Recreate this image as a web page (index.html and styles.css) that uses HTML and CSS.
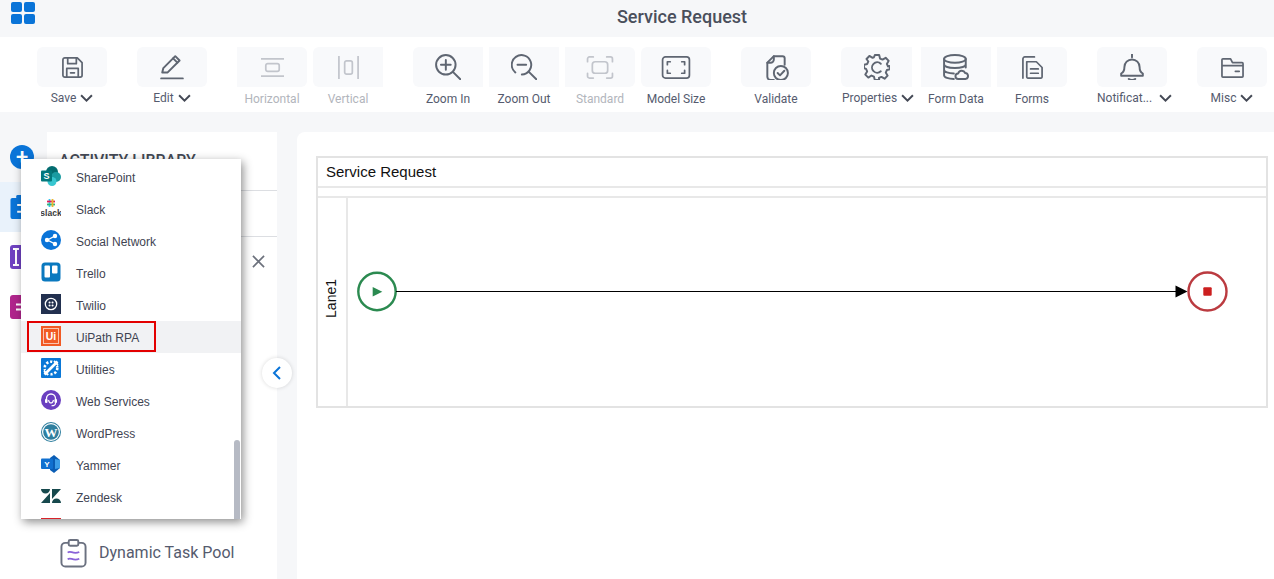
FILE: index.html
```html
<!DOCTYPE html>
<html lang="en">
<head>
    <meta charset="utf-8">
    <title>Service Request</title>
    <link rel="stylesheet" href="styles.css">
</head>
<body>
    <header class="topbar">
        <div class="logo"><span></span><span></span><span></span><span></span></div>
        <h1 class="title">Service Request</h1>
    </header>

    <nav class="toolbar">
        <div class="tool-group">
            <div class="tool">
                <div class="tool-btn"><svg viewBox="0 0 24 24"><path d="M4 2h13l5 5v13a2 2 0 0 1-2 2H4a2 2 0 0 1-2-2V4a2 2 0 0 1 2-2z"/><path d="M7 2v6h9V2M6 22v-9h12v9M10 17.500h4"/></svg></div>
                <div class="tool-label">Save <svg class="chev" viewBox="0 0 12 8"><path d="M1 1l5 5 5-5"/></svg></div>
            </div>
        </div>
        <div class="tool-group">
            <div class="tool">
                <div class="tool-btn"><svg class="big" viewBox="0 0 24 24"><path d="M3 17l1-4L15 2l4 4L8 17z"/><path d="M13 4l4 4M2 22.500h20"/></svg></div>
                <div class="tool-label">Edit <svg class="chev" viewBox="0 0 12 8"><path d="M1 1l5 5 5-5"/></svg></div>
            </div>
        </div>
        <div class="tool-group">
            <div class="tool disabled">
                <div class="tool-btn sq-l"><svg viewBox="0 0 24 24"><rect x="5" y="8" width="14" height="8" rx="2"/><path d="M0 3h24M0 21h24"/></svg></div>
                <div class="tool-label plain">Horizontal</div>
            </div>
            <div class="tool disabled">
                <div class="tool-btn sq-r"><svg viewBox="0 0 24 24"><rect x="8" y="5" width="8" height="14" rx="2"/><path d="M2 0v24M22 0v24"/></svg></div>
                <div class="tool-label plain">Vertical</div>
            </div>
        </div>
        <div class="tool-group">
            <div class="tool">
                <div class="tool-btn sq-r"><svg class="big" viewBox="0 0 24 24"><circle cx="10" cy="10" r="9"/><path d="M10 5.500v9M5.500 10h9M16.500 16.500l7 7"/></svg></div>
                <div class="tool-label plain">Zoom In</div>
            </div>
            <div class="tool">
                <div class="tool-btn sq-l sq-r"><svg class="big" viewBox="0 0 24 24"><path d="M4 17a9 9 0 1 1 6 2"/><path d="M6 10h8M16.500 16.500l7 7"/></svg></div>
                <div class="tool-label plain">Zoom Out</div>
            </div>
            <div class="tool disabled">
                <div class="tool-btn sq-l"><svg class="wide" viewBox="0 0 28 24"><rect x="6" y="6" width="16" height="12" rx="3"/><path d="M1 6V3a2 2 0 0 1 2-2h4M21 1h4a2 2 0 0 1 2 2v3M27 18v3a2 2 0 0 1-2 2h-4M7 23H3a2 2 0 0 1-2-2v-3"/></svg></div>
                <div class="tool-label plain">Standard</div>
            </div>
            <div class="tool">
                <div class="tool-btn"><svg class="wide" viewBox="0 0 30 24"><rect x="1" y="1" width="28" height="22" rx="3"/><path d="M6 9V6h3M21 6h3v3M24 15v3h-3M9 18H6v-3"/></svg></div>
                <div class="tool-label plain">Model Size</div>
            </div>
        </div>
        <div class="tool-group">
            <div class="tool">
                <div class="tool-btn"><svg class="big" viewBox="0 0 24 24"><path d="M10 24H7a3 3 0 0 1-3-3V8l6-6h8a2 2 0 0 1 2 2v6"/><path d="M4 8h3a3 3 0 0 0 3-3V2"/><circle cx="16.500" cy="17.500" r="6.500"/><path d="M13.500 17.500l2.200 2.200 4-4.200"/></svg></div>
                <div class="tool-label plain">Validate</div>
            </div>
        </div>
        <div class="tool-group">
            <div class="tool tool-wide">
                <div class="tool-btn sq-r"><svg class="big" viewBox="0 0 24 24"><path d="M10 1h4l.8 3.200 2.300 1 2.900-1.700 2.800 2.800-1.700 2.900 1 2.300L24 11v3l-2.900.8-1 2.300 1.700 2.900-2.800 2.800-2.900-1.700-2.300 1L14 24h-4l-.8-3.100-2.300-1L4 21.800 1.200 19l1.700-2.900-1-2.300L0 13v-3l3-.8 1-2.300L2.300 4.600 5 1.800l2.900 1.700 1.300-.5z"/><path d="M15.500 9a4.800 4.800 0 1 0 0 7"/></svg></div>
                <div class="tool-label">Properties <svg class="chev" viewBox="0 0 12 8"><path d="M1 1l5 5 5-5"/></svg></div>
            </div>
            <div class="tool">
                <div class="tool-btn sq-l sq-r"><svg class="big" viewBox="0 0 24 24"><ellipse cx="11" cy="4.500" rx="10" ry="3.500"/><path d="M1 4.500v15c0 2 4 3.500 9 3.500M21 4.500v8M1 9.500c0 2 4 3.500 10 3.500s10-1.500 10-3.500M1 14.500c0 2 4 3.500 9 3.500"/><path d="M14 23a2.500 2.500 0 0 1 0-5 3.500 3.500 0 0 1 6.500-.5A2.800 2.800 0 0 1 21 23z"/></svg></div>
                <div class="tool-label plain">Form Data</div>
            </div>
            <div class="tool">
                <div class="tool-btn sq-l"><svg viewBox="0 0 24 24"><path d="M2 23V3a2 2 0 0 1 2-2h10"/><path d="M6 6h10l6 6v10a1 1 0 0 1-1 1H7a1 1 0 0 1-1-1z"/><path d="M10 13.500h8M10 18h8"/></svg></div>
                <div class="tool-label plain">Forms</div>
            </div>
        </div>
        <div class="tool-group">
            <div class="tool">
                <div class="tool-btn"><svg class="big" viewBox="0 0 24 24"><path d="M12 0v3M5 12a7 7 0 0 1 14 0c0 3 1 5 3 6v2H2v-2c2-1 3-3 3-6zM9 23c1 1.200 5 1.200 6 0"/></svg></div>
                <div class="tool-label spread">Notificat... <svg class="chev" viewBox="0 0 12 8"><path d="M1 1l5 5 5-5"/></svg></div>
            </div>
        </div>
        <div class="tool-group">
            <div class="tool">
                <div class="tool-btn"><svg viewBox="0 0 24 24"><path d="M1 21V4a1 1 0 0 1 1-1h8l2 4h10a1 1 0 0 1 1 1v13a1 1 0 0 1-1 1H2a1 1 0 0 1-1-1zM1 10h22M15 16h4"/></svg></div>
                <div class="tool-label">Misc <svg class="chev" viewBox="0 0 12 8"><path d="M1 1l5 5 5-5"/></svg></div>
            </div>
        </div>
    </nav>

    <main class="workspace">
        <aside class="rail">
            <div class="rail-add">+</div>
            <div class="rail-item active">
                <svg viewBox="0 0 24 25"><path d="M2 3h20a2 2 0 0 1 2 2v18a2 2 0 0 1-2 2H2a2 2 0 0 1-2-2V5a2 2 0 0 1 2-2z" fill="#0a74d8"/><rect x="6" y="0" width="12" height="6" rx="1.500" fill="#0a74d8"/><path d="M7 10.500h12M7 17.500h12" stroke="#fff" stroke-width="2"/></svg>
            </div>
            <div class="rail-item">
                <svg viewBox="0 0 24 24"><rect width="24" height="24" rx="3" fill="#6f42c1"/><path d="M3 4h6M3 20h6M6 4v16" stroke="#fff" stroke-width="2"/></svg>
            </div>
            <div class="rail-item">
                <svg viewBox="0 0 24 24"><rect width="24" height="24" rx="3" fill="#b0258c"/><path d="M6 9.500h13M6 14.500h13" stroke="#fff" stroke-width="2"/></svg>
            </div>
        </aside>

        <section class="panel">
            <div class="panel-head">ACTIVITY LIBRARY</div>
            <div class="panel-search"></div>
            <div class="panel-close"><svg viewBox="0 0 14 14"><path d="M1 1l12 12M13 1L1 13"/></svg></div>
            <div class="panel-item">
                <svg viewBox="0 0 28 30"><rect class="clip" x="1.500" y="4" width="25" height="24.500" rx="4"/><rect class="clip" x="9" y="1" width="10" height="6" rx="1.500"/><path class="wave" d="M8 14c3-3 5 2.500 12-.5M8 21c3-3 5 2.500 12-.5"/></svg>
                Dynamic Task Pool
            </div>
            <button class="collapse"><svg viewBox="0 0 10 16"><path d="M8 2L2 8l6 6"/></svg></button>
        </section>

        <section class="canvas">
            <div class="pool">
                <div class="pool-name">Service Request</div>
                <div class="pool-gap"></div>
                <div class="lane">
                    <div class="lane-name"><span>Lane1</span></div>
                    <svg class="diagram" viewBox="348 198 918 208">
                        <circle cx="377" cy="291.500" r="18.700" fill="#fff" stroke="#2b8a50" stroke-width="2.400"/>
                        <path d="M372.700 287v9.500l9.600-4.750z" fill="#2b8a50"/>
                        <path d="M396 291.500h780" stroke="#000" stroke-width="1"/>
                        <path d="M1175.500 285.500l12 6-12 6z" fill="#000"/>
                        <circle cx="1207.500" cy="291.500" r="19" fill="#fff" stroke="#bb3b40" stroke-width="2.400"/>
                        <rect x="1203.300" y="287.300" width="8.400" height="8.400" rx="1" fill="#cc1f1f"/>
                    </svg>
                </div>
            </div>
        </section>
    </main>

    <div class="menu">
        <ul class="menu-list">
            <li class="menu-item">
                <svg viewBox="0 0 20 20"><circle cx="11" cy="6" r="6" fill="#036c70"/><circle cx="15" cy="11" r="5" fill="#1a9ba1"/><circle cx="11" cy="15.500" r="4.500" fill="#37c6d0"/><rect x="0" y="4.500" width="11" height="11" rx="1" fill="#03787c"/><text x="5.500" y="13" class="glyph" font-size="9" fill="#fff">S</text></svg>
                SharePoint
            </li>
            <li class="menu-item">
                <svg viewBox="0 0 20 20"><path d="M8.500 1v8" stroke="#36c5f0" stroke-width="1.800"/><path d="M6 6.500h8" stroke="#2eb67d" stroke-width="1.800"/><path d="M6 3.500h8" stroke="#e01e5a" stroke-width="1.800"/><path d="M11.500 1v8" stroke="#ecb22e" stroke-width="1.800"/><text x="10" y="17.500" class="glyph" font-size="8.500" fill="#3a3a3a">slack</text></svg>
                Slack
            </li>
            <li class="menu-item">
                <svg viewBox="0 0 20 20"><circle cx="10" cy="10" r="10" fill="#0a74d8"/><path d="M14 6l-7.500 4 7.500 4" fill="none" stroke="#fff" stroke-width="1.400"/><circle cx="14" cy="6" r="2.200" fill="#fff"/><circle cx="6" cy="10" r="2.200" fill="#fff"/><circle cx="14" cy="14" r="2.200" fill="#fff"/></svg>
                Social Network
            </li>
            <li class="menu-item">
                <svg viewBox="0 0 20 20"><rect x=".5" y=".5" width="19" height="19" rx="3.500" fill="#0a79bf"/><rect x="3.500" y="3.500" width="5.500" height="12" rx="1" fill="#fff"/><rect x="11" y="3.500" width="5.500" height="8" rx="1" fill="#fff"/></svg>
                Trello
            </li>
            <li class="menu-item">
                <svg viewBox="0 0 20 20"><rect width="20" height="20" fill="#22304f"/><circle cx="10" cy="10" r="5.700" fill="none" stroke="#fff" stroke-width="1.300"/><path d="M8.500 8.500h.1M11.500 8.500h.1M8.500 11.500h.1M11.500 11.500h.1" stroke="#fff" stroke-width="2" stroke-linecap="round"/></svg>
                Twilio
            </li>
            <li class="menu-item marked">
                <svg viewBox="0 0 20 20"><rect width="20" height="20" fill="#f15a24"/><rect x="2.500" y="2.500" width="15" height="15" fill="none" stroke="#fbc4ae" stroke-width="1"/><text x="10" y="14" class="glyph" font-size="10.500" fill="#fff">Ui</text></svg>
                UiPath RPA
            </li>
            <li class="menu-item">
                <svg viewBox="0 0 20 20"><rect width="20" height="20" rx="1" fill="#0a78d7"/><circle cx="10" cy="10" r="6.300" fill="none" stroke="#fff" stroke-width="2.600" stroke-dasharray="2.200 1.800"/><path d="M3.500 16.500l13-13" stroke="#0a78d7" stroke-width="5"/><path d="M3.500 16.500l13-13" stroke="#fff" stroke-width="2.600"/><path d="M13 3l4 4M3 13l4 4" stroke="#fff" stroke-width="1.800"/></svg>
                Utilities
            </li>
            <li class="menu-item">
                <svg viewBox="0 0 20 20"><circle cx="10" cy="10" r="10" fill="#6a3fc0"/><path d="M5.500 10.500V8.500a4.500 4.500 0 0 1 9 0v2" fill="none" stroke="#fff" stroke-width="1.300"/><rect x="4" y="9" width="2.500" height="4" rx="1" fill="#fff"/><rect x="13.500" y="9" width="2.500" height="4" rx="1" fill="#fff"/><path d="M7.500 10c.5 2 1.500 3 2.500 3s2-1 2.500-3M14.500 13c0 1.800-1.800 2.800-4 2.800" fill="none" stroke="#fff" stroke-width="1.100"/></svg>
                Web Services
            </li>
            <li class="menu-item">
                <svg viewBox="0 0 20 20"><circle cx="10" cy="10" r="10" fill="#2f7f9f"/><circle cx="10" cy="10" r="9" fill="#fff"/><circle cx="10" cy="10" r="7.800" fill="#2f7f9f"/><text x="10" y="14.500" class="glyph serif" font-size="13" fill="#fff">W</text></svg>
                WordPress
            </li>
            <li class="menu-item">
                <svg viewBox="0 0 20 20"><path d="M13 1l6 5v8l-6 5-4-3V4z" fill="#0a5db5"/><path d="M14 5l5 1v8l-5 1z" fill="#3d9ee8"/><rect y="4.500" width="12" height="10.500" rx="1" fill="#1070d0"/><text x="6" y="13" class="glyph" font-size="8" fill="#fff">Y</text></svg>
                Yammer
            </li>
            <li class="menu-item">
                <svg viewBox="0 0 20 20"><path d="M0 3h9a4.500 4.500 0 0 1-9 0zM9 7v10H0zM11 3h9L11 13zM11 17a4.500 4.500 0 0 1 9 0z" fill="#17494d"/></svg>
                Zendesk
            </li>
            <li class="menu-item">
                <svg viewBox="0 0 20 20"><rect width="20" height="20" fill="#d8232a"/></svg>
            </li>
        </ul>
        <div class="menu-scroll"></div>
    </div>
</body>
</html>
```

FILE: styles.css
```css
* {
    box-sizing: border-box;
}

html, body {
    margin: 0;
    height: 579px;
    overflow: hidden;
}

body {
    position: relative;
    background-color: #f6f7f9;
    font-family: Roboto, sans-serif;
    color: #555b6e;
}

.topbar {
    display: flex;
    height: 37px;
}

.logo {
    display: grid;
    grid-template-columns: 11px 11px;
    grid-auto-rows: 10px;
    gap: 2px;
    width: 90px;
    padding: 2px 0 0 11px;
}

.logo span {
    background-color: #0a74d8;
    border-radius: 2px;
}

.title {
    flex: 1;
    margin: 0;
    padding-top: 7px;
    text-align: center;
    font-size: 18px;
    line-height: 20px;
    font-weight: 500;
    color: #4a4f5c;
}

/* toolbar */
.toolbar {
    display: flex;
    gap: 30px;
    height: 75px;
    padding: 10px 0 0 37px;
    background-color: #fff;
}

.tool-group {
    display: flex;
    gap: 6px;
}

.tool {
    display: flex;
    flex-direction: column;
    align-items: center;
    width: 70px;
}

.tool-wide {
    width: 74px;
}

.tool-btn {
    display: flex;
    align-items: center;
    justify-content: center;
    width: 100%;
    height: 40px;
    background-color: #f8f9fb;
    border-radius: 6px;
}

.tool-wide .tool-btn {
    align-self: flex-start;
    width: 71px;
}

.tool-btn.sq-l {
    border-top-left-radius: 0;
    border-bottom-left-radius: 0;
}

.tool-btn.sq-r {
    border-top-right-radius: 0;
    border-bottom-right-radius: 0;
}

.tool-btn svg {
    width: 23px;
    height: 23px;
    fill: none;
    stroke: #5f6672;
    stroke-width: 1.800;
    stroke-linecap: round;
    stroke-linejoin: round;
}

.tool-btn svg.big {
    width: 26px;
    height: 26px;
}

.tool-btn svg.wide {
    width: 30px;
}

.tool.disabled .tool-btn svg {
    stroke: #c2c5cc;
}

.tool-label {
    display: flex;
    align-items: center;
    gap: 4px;
    height: 14px;
    margin-top: 4px;
    font-size: 12px;
    line-height: 14px;
    white-space: nowrap;
}

.tool-label.plain {
    margin-top: 5px;
}

.tool-label.spread {
    align-self: flex-start;
    gap: 7px;
}

.tool.disabled .tool-label {
    color: #b2b5bc;
}

.chev {
    width: 13px;
    height: 9px;
    fill: none;
    stroke: #444955;
    stroke-width: 1.800;
}

/* page below the toolbar */
.workspace {
    display: flex;
    height: 467px;
    padding-top: 20px;
}

.rail {
    width: 47px;
    margin-top: -20px;
    padding-top: 33px;
    background: linear-gradient(#f6f7f9 70px, #fff 70px);
}

.rail-add {
    width: 24px;
    height: 24px;
    margin: 0 0 13px 10px;
    border-radius: 50%;
    background-color: #0a74d8;
    color: #fff;
    font-size: 22px;
    font-weight: 500;
    line-height: 24px;
    text-align: center;
}

.rail-item {
    display: flex;
    align-items: center;
    height: 50px;
    padding-left: 10px;
    background-color: #fff;
}

.rail-item.active {
    background-color: #e9f2fb;
}

.rail-item svg {
    width: 24px;
    height: 24px;
}

.panel {
    position: relative;
    display: flex;
    flex-direction: column;
    width: 230px;
    background-color: #fff;
}

.panel-head {
    height: 59px;
    padding: 21px 0 0 12px;
    border-bottom: 1px solid #dcdee2;
    font-size: 16px;
    line-height: 16px;
    font-weight: 500;
    color: #444955;
}

.panel-search {
    height: 46px;
    border-bottom: 1px solid #dcdee2;
}

.panel-close {
    display: flex;
    justify-content: flex-end;
    padding: 18px 12px 0 0;
}

.panel-close svg {
    width: 13px;
    height: 13px;
    fill: none;
    stroke: #6c717c;
    stroke-width: 1.800;
}

.panel-item {
    display: flex;
    align-items: center;
    gap: 12px;
    margin-top: auto;
    padding: 0 0 11px 13px;
    font-size: 16px;
    line-height: 30px;
}

.panel-item svg {
    width: 27px;
    height: 29px;
    fill: none;
}

.clip {
    stroke: #6b7180;
    stroke-width: 2;
    fill: #fff;
}

.wave {
    stroke: #8a63d8;
    stroke-width: 1.800;
}

.collapse {
    position: absolute;
    top: 226px;
    right: -15px;
    width: 30px;
    height: 30px;
    padding: 0;
    border: 0;
    border-radius: 50%;
    background-color: #fff;
    box-shadow: 0 0 4px rgba(0, 0, 0, 0.15);
}

.collapse svg {
    width: 10px;
    height: 16px;
    fill: none;
    stroke: #0a74d8;
    stroke-width: 2;
    vertical-align: middle;
}

/* process diagram */
.canvas {
    flex: 1;
    margin-left: 20px;
    padding: 24px 6px 0 19px;
    background-color: #fff;
    border-top-left-radius: 8px;
}

.pool {
    display: flex;
    flex-direction: column;
    height: 252px;
    border: 2px solid #e3e3e3;
    font-family: "Liberation Sans", Arial, sans-serif;
    color: #111;
}

.pool-name {
    height: 30px;
    padding: 4px 0 0 8px;
    border-bottom: 2px solid #e8e8e8;
    font-size: 15px;
    line-height: 20px;
}

.pool-gap {
    height: 10px;
    border-bottom: 2px solid #e8e8e8;
}

.lane {
    display: flex;
    flex: 1;
}

.lane-name {
    display: flex;
    align-items: center;
    justify-content: center;
    width: 30px;
    padding: 0 3px 7px 0;
    border-right: 2px solid #e8e8e8;
    font-size: 14px;
}

.lane-name span {
    writing-mode: vertical-rl;
    transform: rotate(180deg);
}

.diagram {
    flex: 1;
    width: 918px;
    height: 208px;
}

/* dropdown over the library panel */
.menu {
    position: absolute;
    top: 159px;
    left: 21px;
    width: 220px;
    height: 360px;
    overflow: hidden;
    background-color: #fff;
    box-shadow: 2px 3px 9px rgba(0, 0, 0, 0.45);
    z-index: 5;
}

.menu-list {
    margin: 2px 0 0;
    padding: 0;
    list-style: none;
}

.menu-item {
    position: relative;
    display: flex;
    align-items: center;
    gap: 15px;
    height: 32px;
    padding: 2px 0 0 20px;
    font-family: "Liberation Sans", Arial, sans-serif;
    font-size: 12px;
    color: #3f4452;
}

.menu-item svg {
    flex: none;
    width: 20px;
    height: 20px;
    margin-top: -4px;
}

.menu-item.marked {
    background-color: #f1f2f4;
}

.menu-item.marked::after {
    content: "";
    position: absolute;
    top: 0;
    left: 6px;
    width: 129px;
    height: 31px;
    box-sizing: border-box;
    border: 2px solid #e30000;
}

.glyph {
    font-family: "Liberation Sans", Arial, sans-serif;
    font-weight: 700;
    text-anchor: middle;
}

.glyph.serif {
    font-family: "Liberation Serif", serif;
}

.menu-scroll {
    position: absolute;
    top: 281px;
    right: 1px;
    bottom: 0;
    width: 6px;
    border-radius: 3px 3px 0 0;
    background-color: #b6bac4;
}
```
